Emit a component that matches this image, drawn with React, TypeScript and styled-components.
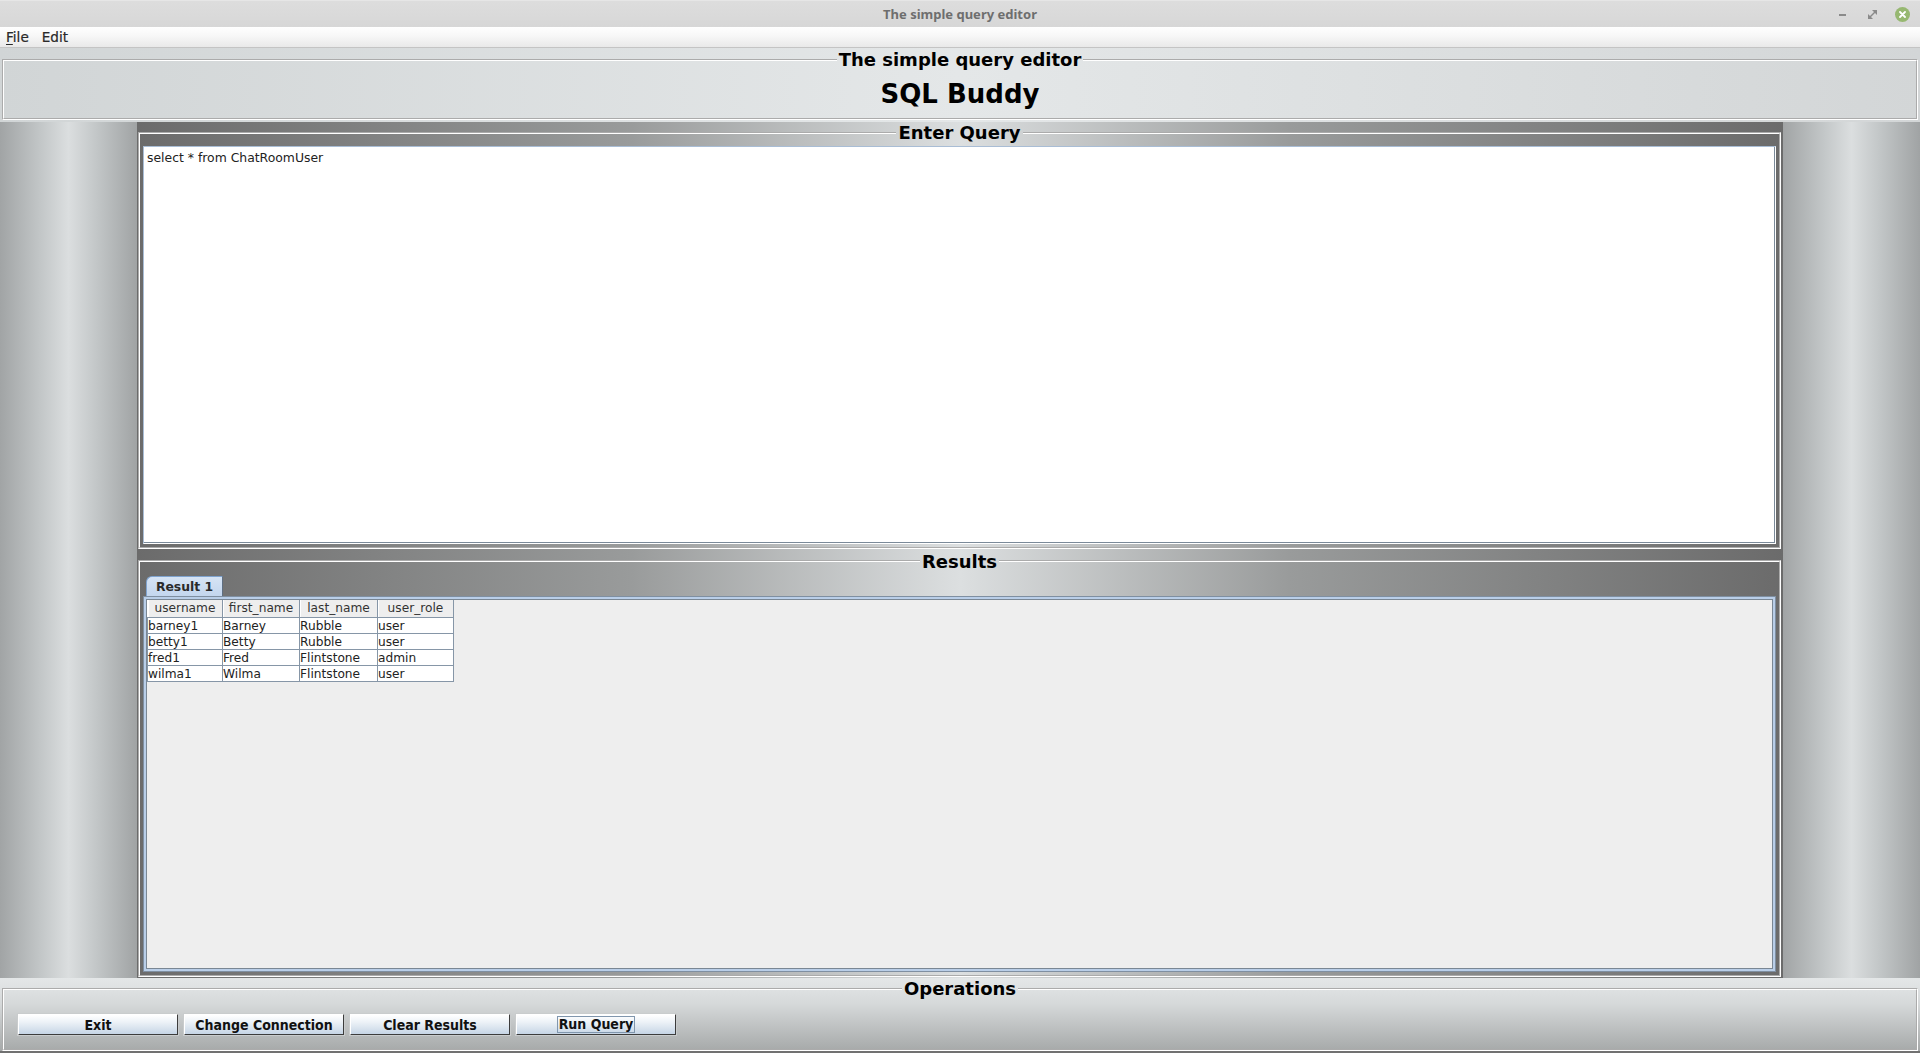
import React from 'react';
import styled, { createGlobalStyle } from 'styled-components';

const GlobalStyle = createGlobalStyle`
  html, body { margin: 0; padding: 0; width: 100%; height: 100%; overflow: hidden; }
  body { font-family: "DejaVu Sans", sans-serif; background: #d8d8d8; }
  #root { width: 1920px; height: 1053px; }
  * { box-sizing: border-box; }
`;

const Window = styled.div`
  width: 1920px;
  height: 1053px;
  display: flex;
  flex-direction: column;
  overflow: hidden;
  background: #d8d8d8;
`;

/* ---------- title bar ---------- */
const TitleBar = styled.div`
  flex: none;
  height: 27px;
  display: grid;
  grid-template-columns: 1fr auto 1fr;
  align-items: center;
  background: linear-gradient(#dddddd, #d7d7d7);
  border-top: 1px solid #e6e6e6;
`;

const WindowTitle = styled.div`
  grid-column: 2;
  font: bold 13px "Noto Sans", "DejaVu Sans", sans-serif;
  color: #6e6e6e;
`;

const WindowControls = styled.div`
  grid-column: 3;
  justify-self: end;
  display: flex;
  align-items: center;
  padding-right: 3px;
`;

const ControlSlot = styled.div`
  width: 30px;
  height: 20px;
  display: flex;
  align-items: center;
  justify-content: center;
`;

const MinimizeBar = styled.span`
  width: 7px;
  height: 2px;
  background: #8a8a8a;
  margin-top: 2px;
`;

const CloseDot = styled.span`
  width: 15px;
  height: 15px;
  border-radius: 50%;
  background: #97b871;
  display: flex;
  align-items: center;
  justify-content: center;
`;

/* ---------- menu bar ---------- */
const MenuBar = styled.nav`
  flex: none;
  height: 21px;
  display: flex;
  align-items: center;
  gap: 13px;
  padding-left: 6px;
  background: linear-gradient(#ffffff, #f7f7f7 45%, #e9e9e9);
  border-bottom: 1px solid #c4c4c4;
`;

const MenuItem = styled.span`
  font: 13.6px "DejaVu Sans", sans-serif;
  color: #2a2a2a;
  -webkit-text-stroke: 0.2px #2a2a2a;
  u { text-decoration-thickness: 1px; text-underline-offset: 2px; }
`;

/* ---------- titled (etched) group ---------- */
const Group = styled.fieldset<{ $pad: string }>`
  margin: 0;
  min-width: 0;
  min-height: 0;
  border: 2px groove #ffffff;
  padding: ${(p) => p.$pad};
  display: flex;
  flex-direction: column;
`;

const Legend = styled.legend<{ $size: number }>`
  margin: 0 auto;
  padding: 0 2px;
  font: bold ${(p) => p.$size}px/21px "DejaVu Sans", sans-serif;
  color: #000;
`;

/* ---------- header ---------- */
const Header = styled.header`
  flex: none;
  height: 74px;
  display: flex;
  flex-direction: column;
  padding: 1px 2px 2px;
  background: linear-gradient(90deg, #d1d5d6, #e4e7e8 50%, #d3d6d7);
`;

const AppName = styled.h1`
  margin: 0;
  text-align: center;
  font: bold 26px/32px "DejaVu Sans", sans-serif;
  color: #000;
`;

/* ---------- middle ---------- */
const Middle = styled.div`
  flex: 1;
  min-height: 0;
  display: grid;
  grid-template-columns: 137px 1fr 137px;
`;

const Gutter = styled.div`
  background: linear-gradient(90deg, #a1a4a5, #c3c7c8 30%, #dbdedf 50%, #c3c7c8 70%, #a0a3a4);
`;

const Center = styled.main`
  min-height: 0;
  display: grid;
  grid-template-rows: 1fr 1fr;
  row-gap: 2px;
  padding: 0 2px 1px 1px;
  background: linear-gradient(90deg, #6b6b6b, #999b9b 30%, #dcdfe0 50%, #999b9b 70%, #6b6b6b);
`;

const QueryArea = styled.textarea`
  flex: 1;
  width: 100%;
  margin: 0;
  resize: none;
  outline: none;
  background: #ffffff;
  border: 1px solid #ffffff;
  border-top-color: #a9bdd5;
  border-left-color: #a9bdd5;
  box-shadow: inset 0 -1px 0 #7b8a99, inset -1px 0 0 #7b8a99;
  padding: 4px 3px 3px;
  font: 12.4px/14px "DejaVu Sans", sans-serif;
  color: #222;
`;

/* ---------- tabbed results ---------- */
const TabPane = styled.div`
  flex: 1;
  min-height: 0;
  display: flex;
  flex-direction: column;
`;

const TabStrip = styled.div`
  display: flex;
  padding-left: 3px;
`;

const Tab = styled.div`
  width: 77px;
  height: 20px;
  display: flex;
  align-items: center;
  justify-content: center;
  background: linear-gradient(#d6e4f5, #c3d6ee);
  border: 1px solid #7fa3cf;
  border-right-color: #5f6f82;
  border-bottom: none;
  border-top-left-radius: 6px;
  font: bold 12.4px "DejaVu Sans", sans-serif;
  color: #2a2a2a;
  padding-top: 1px;
`;

const TabBody = styled.div`
  flex: 1;
  min-height: 0;
  border: 1px solid #7f8fa1;
  padding: 2px;
  background: #b9cee8;
  display: flex;
`;

const TabInner = styled.div`
  flex: 1;
  background: #eeeeee;
  border: 1px solid #7a8794;
  padding: 0;
`;

const Table = styled.table`
  border-collapse: collapse;
  font: 12.2px "DejaVu Sans", sans-serif;
  table-layout: fixed;
`;

const HeadCell = styled.th<{ $w: number }>`
  width: ${(p) => p.$w}px;
  height: 18px;
  padding: 0 2px;
  font-weight: normal;
  text-align: center;
  color: #333;
  background: #eeeeee;
  border: 1px solid #8696a7;
  border-top: none;
  border-left-color: #ffffff;
  box-shadow: inset 1px 0 0 #ffffff;
  white-space: nowrap;
`;

const Cell = styled.td`
  height: 16px;
  padding: 0 1px 0 0;
  color: #222;
  background: #ffffff;
  border: 1px solid #8696a7;
  white-space: nowrap;
  line-height: 14px;
`;

/* ---------- operations ---------- */
const Operations = styled.footer`
  flex: none;
  height: 75px;
  display: flex;
  flex-direction: column;
  padding: 0 2px;
  background: linear-gradient(#e4e7e8, #d6d9da 35%, #a6a9a9);
  border-bottom: 2px solid #717171;
`;

const ButtonRow = styled.div`
  display: flex;
  gap: 6px;
`;

const Button = styled.button`
  width: 160px;
  height: 21px;
  padding: 0;
  display: flex;
  align-items: center;
  justify-content: center;
  background: linear-gradient(#ffffff, #eef3f8 35%, #c6d5e5);
  border: 1px solid;
  border-color: #ffffff #3c3c3c #3c3c3c #ffffff;
  box-shadow: 0 0 0 1px #c9cccd;
  font: bold 14px "DejaVu Sans Condensed", "DejaVu Sans", sans-serif;
  font-stretch: condensed;
  color: #111;
  cursor: default;
`;

const FocusRing = styled.span`
  border: 1px solid #8096ad;
  padding: 0 1px;
  line-height: 15px;
`;

const columns = [
  { key: 'username', w: 75 },
  { key: 'first_name', w: 77 },
  { key: 'last_name', w: 78 },
  { key: 'user_role', w: 76 },
];

const rows = [
  ['barney1', 'Barney', 'Rubble', 'user'],
  ['betty1', 'Betty', 'Rubble', 'user'],
  ['fred1', 'Fred', 'Flintstone', 'admin'],
  ['wilma1', 'Wilma', 'Flintstone', 'user'],
];

const buttons = ['Exit', 'Change Connection', 'Clear Results', 'Run Query'];

export default function App() {
  return (
    <Window>
      <GlobalStyle />
      <TitleBar>
        <WindowTitle>The simple query editor</WindowTitle>
        <WindowControls>
          <ControlSlot>
            <MinimizeBar />
          </ControlSlot>
          <ControlSlot>
            <svg width="9" height="9" viewBox="0 0 9 9">
              <polygon points="4,0 9,0 9,5" fill="#8a8a8a" />
              <polygon points="0,4 0,9 5,9" fill="#8a8a8a" />
              <line x1="2" y1="7" x2="7" y2="2" stroke="#8a8a8a" strokeWidth="1.4" />
            </svg>
          </ControlSlot>
          <ControlSlot>
            <CloseDot>
              <svg width="7" height="7" viewBox="0 0 7 7">
                <path d="M1 1 L6 6 M6 1 L1 6" stroke="#ffffff" strokeWidth="1.8" strokeLinecap="round" />
              </svg>
            </CloseDot>
          </ControlSlot>
        </WindowControls>
      </TitleBar>

      <MenuBar>
        <MenuItem>
          <u>F</u>ile
        </MenuItem>
        <MenuItem>Edit</MenuItem>
      </MenuBar>

      <Header>
        <Group $pad="8px 2px 0" style={{ flex: 1 }}>
          <Legend $size={18}>The simple query editor</Legend>
          <AppName>SQL Buddy</AppName>
        </Group>
      </Header>

      <Middle>
        <Gutter />
        <Center>
          <Group $pad="3px 3px 3px">
            <Legend $size={18}>Enter Query</Legend>
            <QueryArea spellCheck={false} defaultValue="select * from ChatRoomUser" />
          </Group>
          <Group $pad="4px 3px 3px">
            <Legend $size={18}>Results</Legend>
            <TabPane>
              <TabStrip>
                <Tab>Result 1</Tab>
              </TabStrip>
              <TabBody>
                <TabInner>
                  <Table>
                    <thead>
                      <tr>
                        {columns.map((c) => (
                          <HeadCell key={c.key} $w={c.w}>
                            {c.key}
                          </HeadCell>
                        ))}
                      </tr>
                    </thead>
                    <tbody>
                      {rows.map((r) => (
                        <tr key={r[0]}>
                          {r.map((v, i) => (
                            <Cell key={i}>{v}</Cell>
                          ))}
                        </tr>
                      ))}
                    </tbody>
                  </Table>
                </TabInner>
              </TabBody>
            </TabPane>
          </Group>
        </Center>
        <Gutter />
      </Middle>

      <Operations>
        <Group $pad="15px 14px 0" style={{ flex: 1 }}>
          <Legend $size={18}>Operations</Legend>
          <ButtonRow>
            {buttons.map((b) => (
              <Button key={b}>{b === 'Run Query' ? <FocusRing>{b}</FocusRing> : b}</Button>
            ))}
          </ButtonRow>
        </Group>
      </Operations>
    </Window>
  );
}
